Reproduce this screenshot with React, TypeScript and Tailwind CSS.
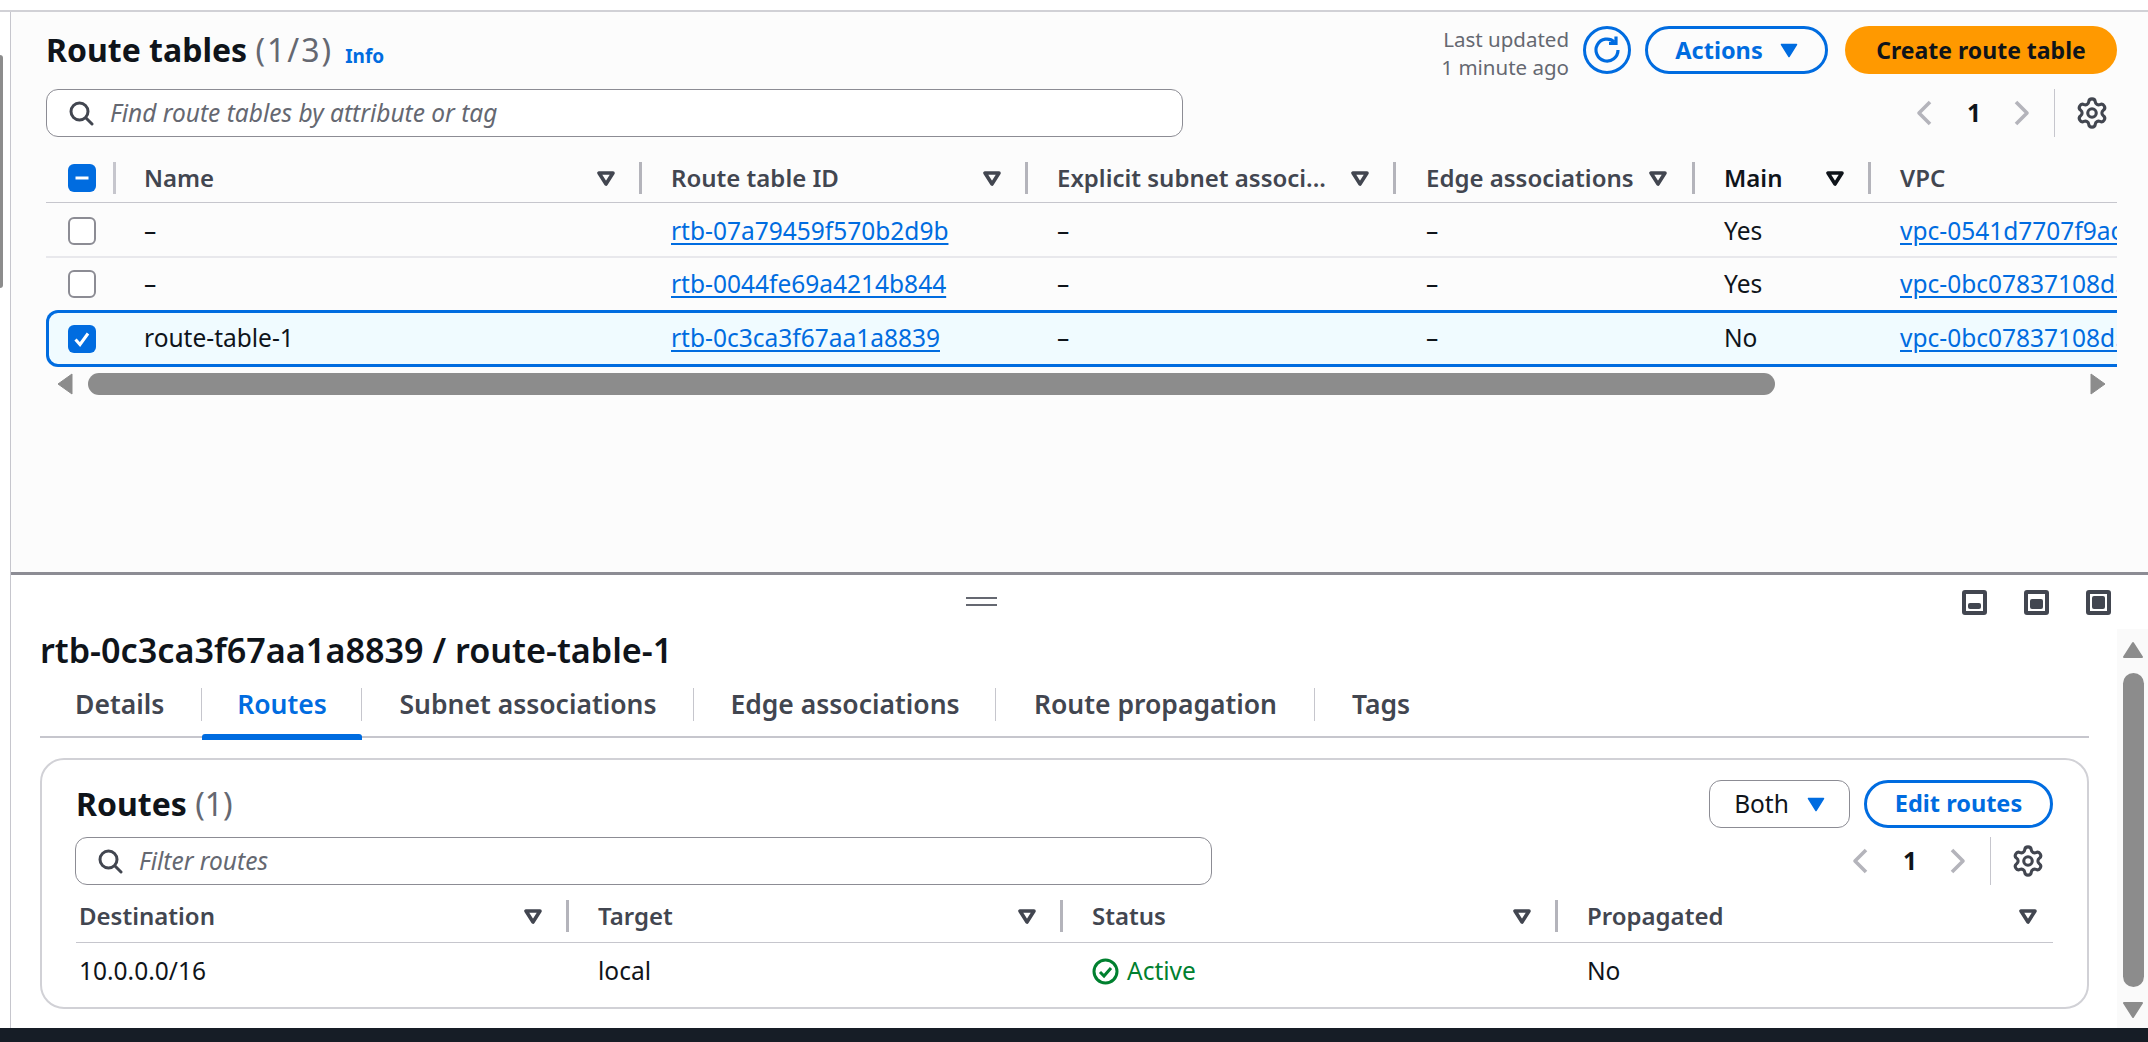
import { Settings } from 'lucide-react'

const font = { sm: 'text-[20.5px]', body: 'text-[24.5px]', head: 'text-[24px]', btn: 'text-[23.5px]' }

function FilterCaret({ dark = false }: { dark?: boolean }) {
  return (
    <svg width="18" height="15" viewBox="0 0 18 15" className="shrink-0">
      <path d="M2 2h14L9 13z" fill="none" stroke={dark ? '#0f141a' : '#424650'} strokeWidth="3.6" strokeLinejoin="round" />
    </svg>
  )
}

function SolidCaret() {
  return (
    <svg width="18" height="15" viewBox="0 0 18 15" className="shrink-0">
      <path d="M1.5 1.5h15L9 13.5z" fill="#006ce0" stroke="#006ce0" strokeWidth="1.5" strokeLinejoin="round" />
    </svg>
  )
}

function SearchIcon() {
  return (
    <svg width="26" height="26" viewBox="0 0 26 26" fill="none" stroke="#424650" strokeWidth="3" strokeLinecap="round" className="shrink-0">
      <circle cx="11.5" cy="11.5" r="8.5" />
      <path d="M18 18l6 6" />
    </svg>
  )
}

function Chevron({ dir }: { dir: 'left' | 'right' }) {
  return (
    <svg width="16" height="26" viewBox="0 0 16 26" fill="none" stroke="#b4b4bb" strokeWidth="3.6" strokeLinejoin="round" className="shrink-0">
      <path d={dir === 'left' ? 'M14 2L3 13l11 11' : 'M2 2l11 11L2 24'} />
    </svg>
  )
}

function Pager() {
  return (
    <div className="mr-2 flex h-12 items-center">
      <Chevron dir="left" />
      <span className={`mx-[35px] w-[12px] font-bold ${font.body} text-[#0f141a]`}>1</span>
      <Chevron dir="right" />
      <div className="ml-6 h-12 w-px bg-[#c6c6cd]" />
      <Settings size={34} strokeWidth={2.2} color="#424650" className="ml-5" />
    </div>
  )
}

function SearchBox({ placeholder, width }: { placeholder: string; width: string }) {
  return (
    <div className={`flex h-12 ${width} items-center gap-4 rounded-xl border border-[#8c8c94] bg-white pl-[21px] ${font.body} italic text-[#656871]`}>
      <SearchIcon />
      {placeholder}
    </div>
  )
}

function CheckBox({ state }: { state?: 'checked' | 'mixed' }) {
  if (!state) return <div className="h-7 w-7 rounded-md border-2 border-[#8c8c94] bg-white" />
  return (
    <div className="flex h-7 w-7 items-center justify-center rounded-md bg-[#006ce0]">
      <svg width="18" height="18" viewBox="0 0 18 18" fill="none" stroke="#fff" strokeWidth="3">
        {state === 'mixed' ? <path d="M2.5 9h13" /> : <path d="M2.5 9.5l4.5 5 8-11" />}
      </svg>
    </div>
  )
}

function HeadCell({ label, pad, dark, divider = true }: { label: string; pad: string; dark?: boolean; divider?: boolean }) {
  return (
    <div className="flex h-8 items-center">
      <div className={`flex min-w-0 flex-1 items-center justify-between ${pad} ${font.head} font-semibold ${dark ? 'text-[#0f141a]' : 'text-[#424650]'}`}>
        <span className="whitespace-nowrap">{label}</span>
        {label !== 'VPC' && <FilterCaret dark={dark} />}
      </div>
      {divider && <div className="h-8 w-[3px] shrink-0 bg-[#b4b4bb]" />}
    </div>
  )
}

const rows = [
  { name: '–', id: 'rtb-07a79459f570b2d9b', main: 'Yes', vpc: 'vpc-0541d7707f9ac3e21' },
  { name: '–', id: 'rtb-0044fe69a4214b844', main: 'Yes', vpc: 'vpc-0bc07837108d5a1f4' },
  { name: 'route-table-1', id: 'rtb-0c3ca3f67aa1a8839', main: 'No', vpc: 'vpc-0bc07837108d5a1f4', selected: true },
]

const topCols = 'grid grid-cols-[70px_526px_386px_368px_299px_176px_1fr] items-center'

function TopPanel() {
  return (
    <section className="flex h-[560px] shrink-0 flex-col bg-[#fcfcfc] pl-[35px] pr-[31px] pt-[14px]">
      <div className="flex h-12 items-center">
        <h1 className="text-[32px] font-bold leading-none text-[#0f141a]">
          Route tables <span className="font-normal tracking-[2px] text-[#656871]">(1/3)</span>
        </h1>
        <span className="ml-[12px] mt-[13px] text-[19px] font-bold text-[#006ce0]">Info</span>
        <div className="ml-auto flex items-center">
          <div className={`mt-[6px] text-right ${font.sm} leading-[28px] text-[#656871]`}>
            <div>Last updated</div>
            <div>1 minute ago</div>
          </div>
          <div className="ml-[14px] flex h-12 w-12 items-center justify-center rounded-full border-[3px] border-[#006ce0]">
            <svg width="32" height="32" viewBox="0 0 32 32" fill="none" stroke="#006ce0" strokeWidth="3.2">
              <path d="M27 16a11 11 0 1 1-3.5-8" />
              <path d="M25 2.5v7h-7" />
            </svg>
          </div>
          <div className={`ml-[14px] flex h-12 w-[183px] items-center justify-center gap-[17px] rounded-full border-[3px] border-[#006ce0] pt-[1px] ${font.btn} font-bold text-[#006ce0]`}>
            Actions
            <SolidCaret />
          </div>
          <div className="ml-[17px] flex h-12 w-[272px] items-center justify-center rounded-full bg-[#ff9900] pt-[1px] text-[23px] font-bold text-[#0f141a]">
            Create route table
          </div>
        </div>
      </div>

      <div className="mt-[15px] flex items-center justify-between">
        <SearchBox placeholder="Find route tables by attribute or tag" width="w-[1137px]" />
        <Pager />
      </div>

      <div className="mt-[25px] w-[2071px] overflow-hidden">
        <div className="w-[2320px]">
          <div className={`${topCols} h-[41px] items-start border-b border-[#c6c6cd]`}>
            <div className="flex h-8 items-center justify-between pl-[22px]">
              <CheckBox state="mixed" />
              <div className="h-8 w-[3px] bg-[#c6c6cd]" />
            </div>
            <HeadCell label="Name" pad="pl-[28px] pr-6" />
            <HeadCell label="Route table ID" pad="pl-[29px] pr-[24px]" />
            <HeadCell label="Explicit subnet associ..." pad="pl-[29px] pr-[24px]" />
            <HeadCell label="Edge associations" pad="pl-[30px] pr-[25px]" />
            <HeadCell label="Main" pad="pl-[29px] pr-[24px]" dark />
            <HeadCell label="VPC" pad="pl-[29px]" divider={false} />
          </div>
          {rows.map((r, i) => (
            <div
              key={r.id}
              className={`${topCols} ${font.body} text-[#0f141a] ${
                r.selected
                  ? 'h-[57px] rounded-xl bg-[#f0fbff] ring-[3px] ring-inset ring-[#006ce0]'
                  : i === 0
                    ? 'h-[55px] border-b-2 border-[#e8e8ec] pt-[3px]'
                    : 'h-[52px]'
              }`}
            >
              <div className="pl-[22px]">
                <CheckBox state={r.selected ? 'checked' : undefined} />
              </div>
              <div className="pl-[28px]">{r.name}</div>
              <div className="pl-[29px] text-[#006ce0] underline underline-offset-[3px]">{r.id}</div>
              <div className="pl-[29px]">–</div>
              <div className="pl-[30px]">–</div>
              <div className="pl-[29px]">{r.main}</div>
              <div className="whitespace-nowrap pl-[29px] text-[#006ce0] underline underline-offset-[3px]">{r.vpc}</div>
            </div>
          ))}
        </div>
      </div>

      <div className="mt-[6px] flex h-[22px] w-[2071px] items-center pl-[11px] pr-[11px]">
        <svg width="16" height="22" viewBox="0 0 16 22" className="shrink-0">
          <path d="M15 1v20L1 11z" fill="#8c8c8c" stroke="#8c8c8c" strokeLinejoin="round" />
        </svg>
        <div className="ml-[15px] h-[22px] w-[1687px] rounded-full bg-[#8c8c8c]" />
        <svg width="16" height="22" viewBox="0 0 16 22" className="ml-auto shrink-0">
          <path d="M1 1v20l14-10z" fill="#8c8c8c" stroke="#8c8c8c" strokeLinejoin="round" />
        </svg>
      </div>
    </section>
  )
}

function PanelIcon({ inner }: { inner: string }) {
  return (
    <div className="flex h-[25px] w-[25px] items-end justify-center rounded-[3px] border-[4px] border-[#424650] bg-white p-[2px]">
      <div className={`${inner} w-full rounded-[2px] bg-[#424650]`} />
    </div>
  )
}

const tabs: { label: string; width: string; active?: boolean }[] = [
  { label: 'Details', width: 'w-[162px]' },
  { label: 'Routes', width: 'w-[160px]', active: true },
  { label: 'Subnet associations', width: 'w-[332px]' },
  { label: 'Edge associations', width: 'w-[302px]' },
  { label: 'Route propagation', width: 'w-[319px]' },
  { label: 'Tags', width: 'w-[132px]' },
]

function Tabs() {
  return (
    <div className="mt-5 flex h-[50px] w-[2049px] items-start border-b-2 border-[#c6c6cd]">
      {tabs.map((t, i) => (
        <div
          key={t.label}
          className={`relative flex h-[50px] ${t.width} items-start ${i === 0 ? 'justify-start pl-[35px]' : 'justify-center'}`}
        >
          {i < tabs.length - 1 && <div className="absolute right-0 top-0 h-[33px] w-px bg-[#c6c6cd]" />}
          <span className={`text-[26.5px] font-semibold leading-[33px] ${t.active ? 'text-[#006ce0]' : 'text-[#424650]'}`}>{t.label}</span>
          {t.active && <div className="absolute bottom-[-2px] left-0 h-[6px] w-full rounded-t-[3px] bg-[#006ce0]" />}
        </div>
      ))}
    </div>
  )
}

const routeCols = 'grid grid-cols-[493px_494px_495px_1fr] items-center'

function RoutesCard() {
  return (
    <div className="mt-5 h-[251px] w-[2049px] rounded-[24px] border-2 border-[#d1d1d6] pl-[34px] pr-[34px] pt-[20px]">
      <div className="flex h-12 items-center justify-between">
        <h3 className="text-[32px] font-bold leading-none text-[#0f141a]">
          Routes <span className="font-normal text-[#656871]">(1)</span>
        </h3>
        <div className="flex items-center gap-[14px]">
          <div className={`flex h-12 w-[141px] items-center justify-center gap-[18px] rounded-xl border border-[#8c8c94] ${font.body} text-[#0f141a]`}>
            Both
            <SolidCaret />
          </div>
          <div className={`flex h-12 w-[189px] items-center justify-center rounded-full border-[3px] border-[#006ce0] ${font.btn} font-bold text-[#006ce0]`}>
            Edit routes
          </div>
        </div>
      </div>

      <div className="-ml-px mt-[9px] flex items-center justify-between">
        <SearchBox placeholder="Filter routes" width="w-[1137px]" />
        <Pager />
      </div>

      <div className={`${routeCols} mt-[15px] h-[43px] items-start border-b border-[#c6c6cd]`}>
        <HeadCell label="Destination" pad="pl-[3px] pr-[24px]" />
        <HeadCell label="Target" pad="pl-[29px] pr-[24px]" />
        <HeadCell label="Status" pad="pl-[29px] pr-[24px]" />
        <HeadCell label="Propagated" pad="pl-[29px] pr-4" divider={false} />
      </div>
      <div className={`${routeCols} h-[56px] ${font.body} text-[#0f141a]`}>
        <div className="pl-[3px]">10.0.0.0/16</div>
        <div className="pl-[29px]">local</div>
        <div className="flex items-center gap-[8px] pl-[29px] text-[#00802f]">
          <svg width="27" height="27" viewBox="0 0 27 27" fill="none" stroke="#00802f" strokeWidth="3">
            <circle cx="13.5" cy="13.5" r="11.5" />
            <path d="M8 14l4 4 7-8" />
          </svg>
          Active
        </div>
        <div className="pl-[29px]">No</div>
      </div>
    </div>
  )
}

function VerticalScroll() {
  return (
    <div className="mt-[54px] flex w-[31px] shrink-0 flex-col items-center bg-[#fafafa] pl-[1px]">
      <svg width="22" height="18" viewBox="0 0 22 18" className="mt-[12px] shrink-0">
        <path d="M11 2L2 16h18z" fill="#8c8c8c" stroke="#8c8c8c" strokeWidth="2" strokeLinejoin="round" />
      </svg>
      <div className="mt-[14px] h-[314px] w-[21px] shrink-0 rounded-full bg-[#8c8c8c]" />
      <svg width="22" height="18" viewBox="0 0 22 18" className="mt-[14px] shrink-0">
        <path d="M2 2h18L11 16z" fill="#8c8c8c" stroke="#8c8c8c" strokeWidth="2" strokeLinejoin="round" />
      </svg>
    </div>
  )
}

function BottomPanel() {
  return (
    <section className="relative flex min-h-0 flex-1 border-t-[3px] border-[#8c8c94] bg-white">
      <div className="min-w-0 flex-1 pl-[29px]">
        <div className="flex h-[57px] items-start pt-[15px]">
          <div className="ml-[926px] mt-[7px] h-[9px] w-[31px] border-y-2 border-[#656871]" />
          <div className="ml-[965px] flex gap-[37px]">
            <PanelIcon inner="h-[6px]" />
            <PanelIcon inner="h-[10px]" />
            <PanelIcon inner="h-[13px]" />
          </div>
        </div>
        <h2 className="text-[34.2px] font-semibold leading-[36px] text-[#0f141a]">rtb-0c3ca3f67aa1a8839 / route-table-1</h2>
        <Tabs />
        <RoutesCard />
      </div>
      <VerticalScroll />
    </section>
  )
}

export default function App() {
  return (
    <div className="flex h-[1042px] w-[2148px] flex-col overflow-hidden bg-white font-['Noto_Sans',sans-serif]">
      <div className="h-3 shrink-0 border-b-2 border-[#d1d1d6] bg-white" />
      <div className="flex min-h-0 flex-1">
        <div className="relative w-[11px] shrink-0 border-r border-[#c6c6cd] bg-white">
          <div className="absolute left-0 top-[43px] h-[233px] w-[3px] rounded-r-full bg-[#8c8c8c]" />
        </div>
        <div className="flex min-w-0 flex-1 flex-col">
          <TopPanel />
          <BottomPanel />
        </div>
      </div>
      <div className="h-[14px] shrink-0 bg-[#161d26]" />
    </div>
  )
}
